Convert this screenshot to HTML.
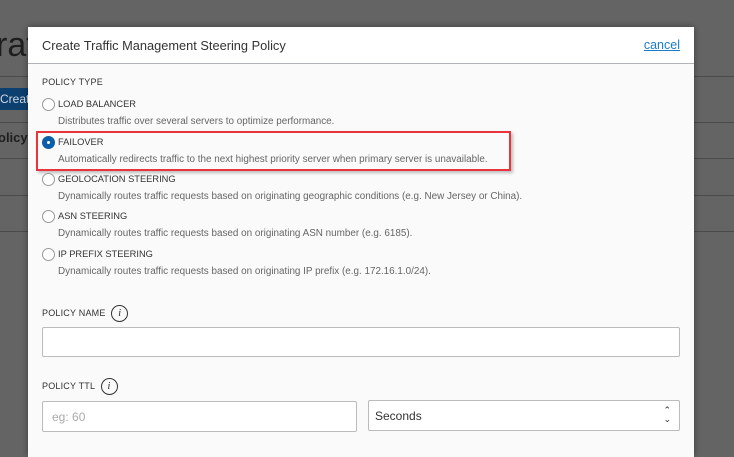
<!DOCTYPE html>
<html><head><style>
*{box-sizing:border-box;margin:0;padding:0}
body{width:734px;height:448px;overflow:hidden;background:#646464;font-family:"Liberation Sans",sans-serif;position:relative}
.bg{position:absolute;left:0;color:#1e1e1e}
.line{position:absolute;left:0;width:734px;height:1px;background:#4a4a4a}
.modal{position:absolute;left:28px;top:27px;width:666px;height:430px;background:#fafafa;box-shadow:0 0 6px rgba(0,0,0,.4)}
.hdr{height:37px;background:#fff;border-bottom:1px solid #b0b4b8;position:relative}
.hdr h1{position:absolute;left:14px;top:11px;font-size:12.8px;font-weight:normal;color:#333}
.hdr a{position:absolute;right:14px;top:11px;font-size:12.5px;color:#1a7bc9;text-decoration:underline}
.lbl{position:absolute;font-size:9px;color:#333;letter-spacing:.2px}
.opt{position:absolute;left:14px;font-size:9.3px;color:#333}
.opt .r{position:absolute;left:0;top:0;width:13px;height:13px;border:1px solid #999;border-radius:50%;background:#fff}
.opt .t{position:absolute;left:16px;top:1px;white-space:nowrap}
.opt .d{position:absolute;left:16px;top:18px;white-space:nowrap;color:#666;font-size:9.9px}
.sel .r{background:#0d5ea8;border-color:#0d5ea8}
.sel .r:after{content:"";position:absolute;left:4px;top:4px;width:3px;height:3px;background:#fff;border-radius:50%}
.info{display:inline-block;width:17px;height:17px;border:1px solid #333;border-radius:50%;text-align:center;font-size:11px;font-style:italic;font-family:"Liberation Serif",serif;line-height:15px;vertical-align:middle;margin-left:3px}
.in{position:absolute;background:#fff;border:1px solid #bbb;border-radius:2px;font-size:12px}
</style></head><body>
<div class="bg" style="top:26px;font-size:34px;left:-4px">raf</div>
<div class="line" style="top:76px"></div>
<div style="position:absolute;left:0;top:88px;width:30px;height:22px;background:#0d3f6f;color:#cfd8e3;font-size:12px;padding-top:4px">Creat</div>
<div class="line" style="top:122px"></div>
<div class="bg" style="top:130px;font-size:13px;font-weight:bold;left:-2px">olicy</div>
<div class="line" style="top:158px"></div>
<div class="line" style="top:195px"></div>
<div class="line" style="top:231px"></div>
<div class="modal">
 <div class="hdr"><h1>Create Traffic Management Steering Policy</h1><a>cancel</a></div>
 <div class="lbl" style="left:14px;top:50px">POLICY TYPE</div>
 <div class="opt" style="top:71px"><span class="r"></span><span class="t">LOAD BALANCER</span><span class="d">Distributes traffic over several servers to optimize performance.</span></div>
 <div style="position:absolute;left:8px;top:104px;width:475px;height:40px;border:2px solid #e8343a;box-shadow:2px 2px 3px rgba(0,0,0,.25)"></div>
 <div class="opt sel" style="top:109px"><span class="r"></span><span class="t">FAILOVER</span><span class="d">Automatically redirects traffic to the next highest priority server when primary server is unavailable.</span></div>
 <div class="opt" style="top:146px"><span class="r"></span><span class="t">GEOLOCATION STEERING</span><span class="d">Dynamically routes traffic requests based on originating geographic conditions (e.g. New Jersey or China).</span></div>
 <div class="opt" style="top:183px"><span class="r"></span><span class="t">ASN STEERING</span><span class="d">Dynamically routes traffic requests based on originating ASN number (e.g. 6185).</span></div>
 <div class="opt" style="top:221px"><span class="r"></span><span class="t">IP PREFIX STEERING</span><span class="d">Dynamically routes traffic requests based on originating IP prefix (e.g. 172.16.1.0/24).</span></div>
 <div class="lbl" style="left:14px;top:278px">POLICY NAME <span class="info">i</span></div>
 <div class="in" style="left:14px;top:300px;width:638px;height:30px"></div>
 <div class="lbl" style="left:14px;top:351px">POLICY TTL <span class="info">i</span></div>
 <div class="in" style="left:14px;top:374px;width:315px;height:31px;color:#aaa;padding:8px 0 0 9px">eg: 60</div>
 <div class="in" style="left:340px;top:373px;width:312px;height:31px;color:#333;padding:8px 0 0 6px">Seconds<span style="position:absolute;right:8px;top:5px;font-size:9px;line-height:9px;color:#333">&#8963;<br>&#8964;</span></div>
</div>
</body></html>
